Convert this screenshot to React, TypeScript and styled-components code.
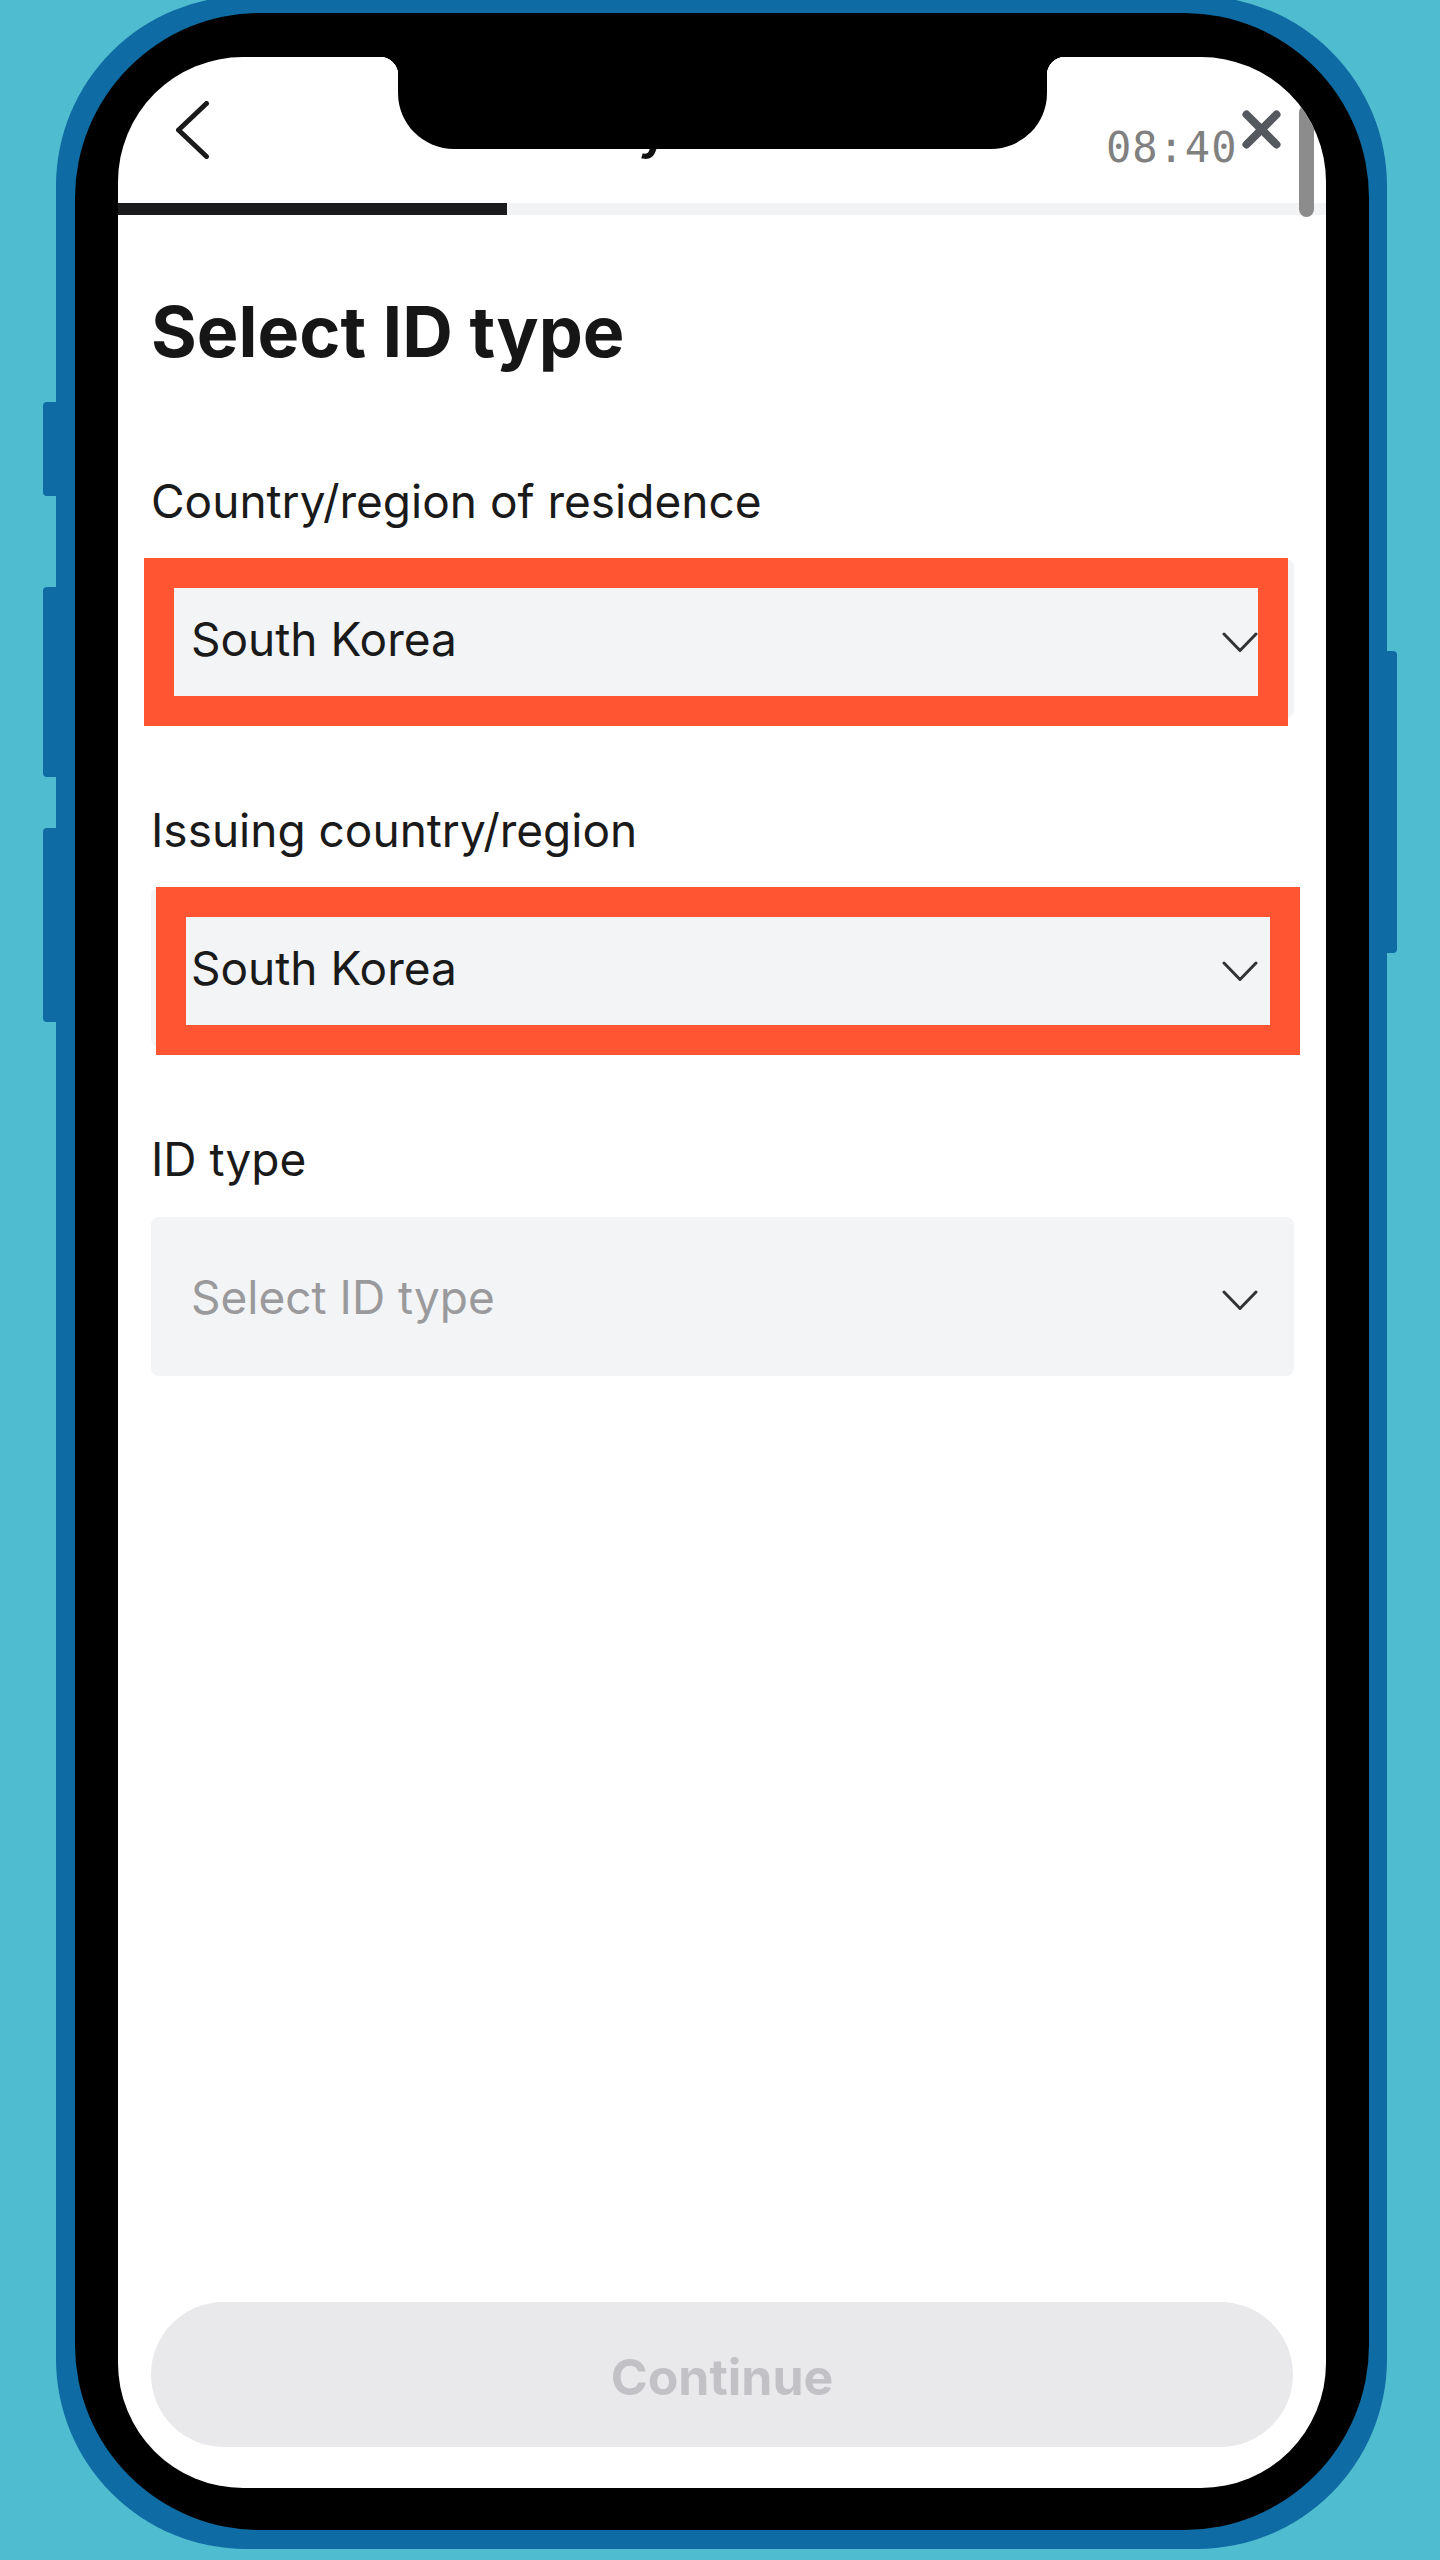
import styled, { createGlobalStyle } from 'styled-components';

const GlobalStyle = createGlobalStyle`
  body {
    margin: 0;
    font-family: Inter, 'Noto Sans', sans-serif;
    color: #1a1a1a;
  }

  * {
    box-sizing: border-box;
  }
`;

type KeyProps = {
  side: 'left' | 'right';
  top: number;
  length: number;
};

type HighlightProps = {
  shift: number;
};

type ValueProps = {
  placeholder?: boolean;
};

const Page = styled.div`
  width: 1440px;
  height: 2560px;
  display: flex;
  align-items: flex-start;
  padding-left: 56px;
  background-color: #50bcd0;
  overflow: hidden;
`;

const Shell = styled.div`
  position: relative;
  width: 1331px;
  height: 2553px;
  margin-top: -4px;
  padding: 17px 18px 19px 19px;
  border-radius: 190px;
  background-color: #0e6ba3;
`;

const SideKey = styled.span<KeyProps>`
  position: absolute;
  top: ${({ top }) => top}px;
  height: ${({ length }) => length}px;
  width: ${({ side }) => (side === 'left' ? 13 : 10)}px;
  ${({ side }) => (side === 'left' ? 'left: -13px;' : 'right: -10px;')}
  border-radius: ${({ side }) => (side === 'left' ? '4px 0 0 4px' : '0 4px 4px 0')};
  background-color: #0e6ba3;
`;

const Bezel = styled.div`
  width: 1294px;
  height: 2517px;
  padding: 44px 43px 42px 43px;
  border-radius: 185px;
  background-color: #000;
`;

const Screen = styled.div`
  position: relative;
  width: 1208px;
  height: 2431px;
  display: flex;
  flex-direction: column;
  border-radius: 125px;
  background-color: #fff;
  overflow: hidden;
`;

const Notch = styled.div`
  position: absolute;
  top: 0;
  left: 280px;
  width: 649px;
  height: 92px;
  border-radius: 0 0 56px 56px;
  background-color: #000;
  z-index: 3;

  &::before,
  &::after {
    content: '';
    position: absolute;
    top: 0;
    width: 18px;
    height: 18px;
  }

  &::before {
    left: -18px;
    background: radial-gradient(circle at 0 100%, transparent 18px, #000 18.5px);
  }

  &::after {
    right: -18px;
    background: radial-gradient(circle at 100% 100%, transparent 18px, #000 18.5px);
  }
`;

const Header = styled.header`
  position: relative;
  height: 146px;
  display: grid;
  grid-template-columns: 1fr auto 1fr;
  align-items: center;
`;

const BackButton = styled.button`
  justify-self: start;
  display: flex;
  padding: 0 0 0 58px;
  border: none;
  background: none;
`;

const NavTitle = styled.h2`
  margin: 0;
  font-size: 52px;
  line-height: 64px;
  font-weight: 600;
  color: #111;
`;

const CloseButton = styled.button`
  justify-self: end;
  display: flex;
  padding: 0 45px 0 0;
  margin-top: -1px;
  border: none;
  background: none;
`;

const StatusTime = styled.span`
  position: absolute;
  top: 70px;
  left: 988px;
  font-family: 'DejaVu Sans Mono', monospace;
  font-size: 42px;
  line-height: 42px;
  letter-spacing: 1px;
  color: #808080;
  z-index: 2;
`;

const ScrollThumb = styled.span`
  position: absolute;
  top: 48px;
  left: 1181px;
  width: 15px;
  height: 112px;
  border-radius: 8px;
  background-color: #8c8c8c;
  z-index: 2;
`;

const Progress = styled.div`
  height: 12px;
  background-color: #f2f3f5;
`;

const ProgressFill = styled.div`
  height: 100%;
  background-color: #1b1b1d;
`;

const Content = styled.main`
  flex: 1;
  padding: 75px 32px 0 33px;
`;

const Title = styled.h1`
  margin: 0 0 98px;
  font-size: 70px;
  line-height: 84px;
  font-weight: 700;
  color: #161616;
`;

const Form = styled.form`
  display: flex;
  flex-direction: column;
  gap: 83px;
`;

const FieldGroup = styled.div`
  display: flex;
  flex-direction: column;
  gap: 29px;
`;

const Label = styled.label`
  font-size: 46px;
  line-height: 58px;
  color: #1a1a1a;
`;

const Select = styled.div`
  position: relative;
  height: 159px;
  display: flex;
  align-items: center;
  justify-content: space-between;
  padding: 0 36px 0 40px;
  border-radius: 8px;
  background-color: #f3f4f6;
`;

const Value = styled.span<ValueProps>`
  font-size: 46px;
  line-height: 56px;
  color: ${({ placeholder }) => (placeholder ? '#9a9a9c' : '#1a1a1a')};
`;

const Chevron = styled.svg`
  margin-top: 8px;
`;

const Highlight = styled.span<HighlightProps>`
  position: absolute;
  top: -1px;
  left: ${({ shift }) => shift}px;
  width: 1144px;
  height: 168px;
  border: 30px solid #ff5533;
  pointer-events: none;
`;

const Footer = styled.footer`
  padding: 0 33px 41px 33px;
`;

const ContinueButton = styled.button`
  width: 100%;
  height: 145px;
  padding-top: 6px;
  border: none;
  border-radius: 73px;
  background-color: #e9e9eb;
  font-family: inherit;
  font-size: 50px;
  font-weight: 700;
  color: #c2c2c6;
`;

const fields = [
  { label: 'Country/region of residence', value: 'South Korea', shift: -7 },
  { label: 'Issuing country/region', value: 'South Korea', shift: 5 },
  { label: 'ID type', value: 'Select ID type', placeholder: true },
];

const DownArrow = () => (
  <Chevron width="36" height="21" viewBox="0 0 36 21" fill="none">
    <path
      d="M2 2 L18 18.5 L34 2"
      stroke="#333"
      strokeWidth="3"
      strokeLinecap="round"
      strokeLinejoin="round"
    />
  </Chevron>
);

export default function App() {
  return (
    <>
      <GlobalStyle />
      <Page>
        <Shell>
          <SideKey side="left" top={406} length={94} />
          <SideKey side="left" top={591} length={190} />
          <SideKey side="left" top={832} length={194} />
          <SideKey side="right" top={655} length={302} />
          <Bezel>
            <Screen>
              <Notch />
              <StatusTime>08:40</StatusTime>
              <ScrollThumb />
              <Header>
                <BackButton aria-label="Back">
                  <svg width="34" height="58" viewBox="0 0 34 58" fill="none">
                    <path
                      d="M30.5 2.5 L2.5 29 L30.5 55.5"
                      stroke="#1a1a1a"
                      strokeWidth="5"
                      strokeLinecap="round"
                      strokeLinejoin="round"
                    />
                  </svg>
                </BackButton>
                <NavTitle>Identity verification</NavTitle>
                <CloseButton aria-label="Close">
                  <svg width="39" height="39" viewBox="0 0 39 39" fill="none">
                    <path
                      d="M4.5 4.5 L34.5 34.5 M34.5 4.5 L4.5 34.5"
                      stroke="#55585e"
                      strokeWidth="8"
                      strokeLinecap="round"
                    />
                  </svg>
                </CloseButton>
              </Header>
              <Progress>
                <ProgressFill style={{ width: '32.2%' }} />
              </Progress>
              <Content>
                <Title>Select ID type</Title>
                <Form>
                  {fields.map((field) => (
                    <FieldGroup key={field.label}>
                      <Label>{field.label}</Label>
                      <Select>
                        <Value placeholder={field.placeholder}>{field.value}</Value>
                        <DownArrow />
                        {field.shift !== undefined && <Highlight shift={field.shift} />}
                      </Select>
                    </FieldGroup>
                  ))}
                </Form>
              </Content>
              <Footer>
                <ContinueButton type="button">Continue</ContinueButton>
              </Footer>
            </Screen>
          </Bezel>
        </Shell>
      </Page>
    </>
  );
}
